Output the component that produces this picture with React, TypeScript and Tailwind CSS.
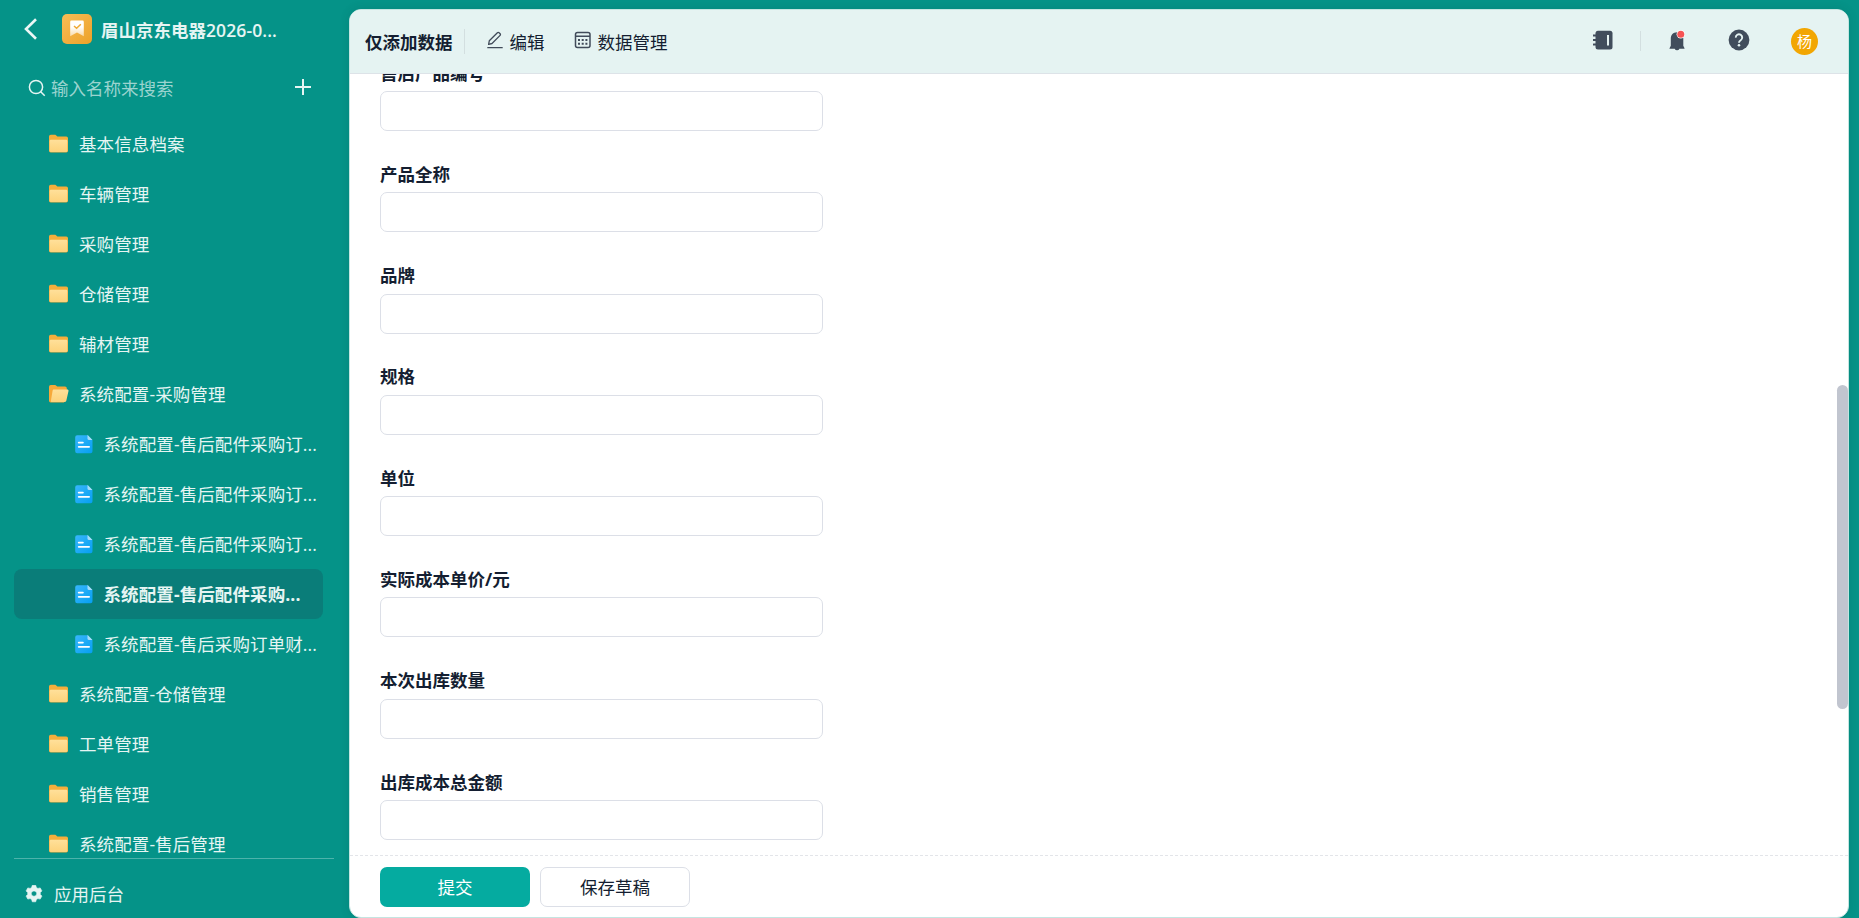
import { useState } from "react";
import { clsx } from "clsx";

type TreeItem = {
  label: string;
  kind: "folder" | "open" | "form";
};

const TREE: TreeItem[] = [
  { label: "基本信息档案", kind: "folder" },
  { label: "车辆管理", kind: "folder" },
  { label: "采购管理", kind: "folder" },
  { label: "仓储管理", kind: "folder" },
  { label: "辅材管理", kind: "folder" },
  { label: "系统配置-采购管理", kind: "open" },
  { label: "系统配置-售后配件采购订...", kind: "form" },
  { label: "系统配置-售后配件采购订...", kind: "form" },
  { label: "系统配置-售后配件采购订...", kind: "form" },
  { label: "系统配置-售后配件采购...", kind: "form" },
  { label: "系统配置-售后采购订单财...", kind: "form" },
  { label: "系统配置-仓储管理", kind: "folder" },
  { label: "工单管理", kind: "folder" },
  { label: "销售管理", kind: "folder" },
  { label: "系统配置-售后管理", kind: "folder" },
];

const FIELDS = [
  "售后产品编号",
  "产品全称",
  "品牌",
  "规格",
  "单位",
  "实际成本单价/元",
  "本次出库数量",
  "出库成本总金额",
];

function Gradients() {
  return (
    <svg width="0" height="0" className="absolute">
      <defs>
        <linearGradient id="folder" x1="0" y1="0" x2="0" y2="1">
          <stop offset="0" stopColor="#ffe09a" />
          <stop offset="1" stopColor="#fdd27a" />
        </linearGradient>
        <linearGradient id="doc" x1="0" y1="0" x2="1" y2="1">
          <stop offset="0" stopColor="#38b6fb" />
          <stop offset="1" stopColor="#069ff2" />
        </linearGradient>
        <linearGradient id="mark" x1="0" y1="0" x2="0" y2="1">
          <stop offset="0.4" stopColor="#fff" />
          <stop offset="1" stopColor="#fff" stopOpacity="0.55" />
        </linearGradient>
      </defs>
    </svg>
  );
}

function FolderIcon() {
  return (
    <svg width="20" height="20" viewBox="0 0 20 20" className="shrink-0">
      <path d="M0 2.600A1.800 1.800 0 0 1 1.800.8h4.600l2 1.700h8.800A1.800 1.800 0 0 1 19 4.300V16.800a1.800 1.800 0 0 1-1.800 1.800H1.800A1.800 1.800 0 0 1 0 16.800z" fill="#f6ae3c" />
      <rect x=".6" y="5.800" width="17.800" height="12.300" rx="1.300" fill="url(#folder)" />
    </svg>
  );
}

function FolderOpenIcon() {
  return (
    <svg width="20" height="20" viewBox="0 0 20 20" className="shrink-0">
      <path d="M0 2.800A1.800 1.800 0 0 1 1.800 1h4.500l2 1.500H16a1.800 1.800 0 0 1 1.800 1.800v8L15 18.600H1.800A1.800 1.800 0 0 1 0 16.800z" fill="#f6a93a" />
      <path d="M4.900 5.600h13.400c.8 0 1.400.7 1.200 1.500L17.300 16.700a1.900 1.900 0 0 1-1.800 1.400H3c-.8 0-1.300-.7-1.100-1.400L3.600 6.800c.1-.7.600-1.200 1.300-1.200z" fill="url(#folder)" />
    </svg>
  );
}

function FormIcon() {
  return (
    <svg width="18" height="20" viewBox="0 0 18 20" className="shrink-0">
      <path d="M2.200 1.200H12.500L17.500 6.200V17.200A2 2 0 0 1 15.500 19.200H2.200A2 2 0 0 1 .2 17.200V3.200A2 2 0 0 1 2.200 1.200z" fill="url(#doc)" />
      <path d="M12.500.8 17.500 6H14a1.500 1.500 0 0 1-1.500-1.500z" fill="#a5ddfb" />
      <path d="M3.700 8.600h4.200M3.700 12.800h10.400" stroke="#fff" strokeWidth="1.800" strokeLinecap="round" />
    </svg>
  );
}

function Sidebar() {
  const [active, setActive] = useState(9);

  return (
    <aside className="flex h-full w-[349px] shrink-0 flex-col text-[#e6f5f3]">
      <div className="flex h-[58px] shrink-0 items-center pl-[23px]">
        <svg width="16" height="24" viewBox="0 0 16 24" fill="none" stroke="#fff" strokeOpacity="0.92" strokeWidth="2.600">
          <path d="M13 2.200 3 12l10 9.800" />
        </svg>
        <span className="ml-[23px] flex h-[30px] w-[30px] items-center justify-center rounded-[5px] bg-linear-to-br from-[#f7bd55] to-[#eda126]">
          <svg width="14" height="18" viewBox="0 0 14 18">
            <path d="M1.500.6h11A1.300 1.300 0 0 1 13.800 1.900v14.400L7 12.600.2 16.300V1.900A1.300 1.300 0 0 1 1.500.6z" fill="url(#mark)" />
            <path d="m4 6 2.600 2.300L10.800 4.300" fill="none" stroke="#efa933" strokeWidth="1.500" />
          </svg>
        </span>
        <span className="mt-[2px] ml-[9px] font-bold whitespace-nowrap">
          眉山京东电器<span className="font-semibold tracking-[0.100px]">2026-0...</span>
        </span>
      </div>

      <div className="flex h-[61px] shrink-0 items-center pl-[28px]">
        <svg width="18" height="18" viewBox="0 0 18 18" fill="none" stroke="#e6f5f3" strokeWidth="1.500" className="mb-[2px] shrink-0">
          <circle cx="8" cy="8" r="6.600" />
          <path d="m12.700 12.700 4 4" />
        </svg>
        <span className="mb-[2px] ml-[5px] text-[#9bd4cf]">输入名称来搜索</span>
        <svg width="18" height="18" viewBox="0 0 18 18" className="mr-[37px] mb-[3px] ml-auto" stroke="#e6f5f3" strokeWidth="2">
          <path d="M9 1v16M1 9h16" />
        </svg>
      </div>

      <nav className="min-h-0 flex-1 overflow-hidden pl-[14px]">
        {TREE.map((item, idx) => (
          <button
            key={idx}
            onClick={() => setActive(idx)}
            className={clsx(
              "flex h-[50px] w-[309px] items-center rounded-[8px] text-left tracking-[0.100px] whitespace-nowrap",
              item.kind === "form" ? "pl-[61px]" : "pl-[35px]",
              idx === active && "bg-[#0a7d79] font-bold"
            )}
          >
            {item.kind === "folder" && <FolderIcon />}
            {item.kind === "open" && <FolderOpenIcon />}
            {item.kind === "form" && <FormIcon />}
            <span className={item.kind === "form" ? "mb-px ml-[10.500px]" : "mb-px ml-[10px]"}>{item.label}</span>
          </button>
        ))}
      </nav>

      <div className="mr-[15px] ml-[14px] flex h-[60px] shrink-0 items-center border-t border-[#4db3ab] pt-[10px] pl-[11px]">
        <svg width="18" height="18" viewBox="0 0 18 18">
          <path
            fillRule="evenodd"
            d="M7.300.3h3.400l.7 2.200 1.500.9 2.300-.5 1.700 3-1.600 1.700v1.800l1.600 1.700-1.700 3-2.300-.5-1.500.9-.7 2.300H7.300l-.7-2.300-1.500-.9-2.300.5-1.700-3 1.600-1.700V7.600L1.100 5.900l1.700-3 2.300.5 1.500-.9zM9 5.900a2.700 2.700 0 1 0 0 5.400 2.700 2.700 0 0 0 0-5.400z"
            fill="#e6f5f3"
            stroke="#e6f5f3"
            strokeWidth="0.600"
            strokeLinejoin="round"
          />
        </svg>
        <span className="ml-[11px]">应用后台</span>
      </div>
    </aside>
  );
}

function Header() {
  return (
    <header className="flex h-[64px] shrink-0 items-center border-b border-[#dde3e8] bg-[#e5f3f2] pl-[15px] text-[#141e31]">
      <span className="font-bold">仅添加数据</span>
      <span className="mb-px ml-[11px] h-[25px] w-px bg-[#d3dfe0]" />
      <button className="ml-[22px] flex items-center">
        <svg width="16" height="18" viewBox="0 0 16 18" fill="none" stroke="#414b5a" strokeWidth="1.300" className="mb-[3px]">
          <path d="M1.600 13.300 2.300 9.800 10.400 1.700a1.200 1.200 0 0 1 1.700 0l1 1a1.200 1.200 0 0 1 0 1.700L5 12.500z" strokeLinejoin="round" />
          <path d="M.3 16.700h15.400" />
        </svg>
        <span className="ml-[7px]">编辑</span>
      </button>
      <button className="ml-[29px] flex items-center">
        <svg width="18" height="18" viewBox="0 0 18 18" fill="none" stroke="#414b5a" strokeWidth="1.500" className="mb-[3px]">
          <rect x="1.500" y="1.500" width="14.500" height="15" rx="2" />
          <path d="M1.500 5.300h14.500" />
          <path d="M4 9h2M7.700 9h2M11.400 9h2M4 12.700h2M7.700 12.700h2M11.400 12.700h2" strokeWidth="1.900" />
        </svg>
        <span className="ml-[6px]">数据管理</span>
      </button>

      <div className="mr-[30px] mb-px ml-auto flex items-center">
        <svg width="20" height="20" viewBox="0 0 20 20" className="mb-[2px]">
          <rect x="2.500" y="0.700" width="17" height="18.800" rx="2.500" fill="#414d5c" />
          <path d="M.5 5.500h4M.5 10h4M.5 14.600h4" stroke="#414d5c" strokeWidth="2" strokeLinecap="round" />
          <path d="M15 5v10.500" stroke="#e5f3f2" strokeWidth="2" />
        </svg>
        <span className="ml-[27px] h-[20px] w-px bg-[#d3dfe0]" />
        <svg width="17" height="22" viewBox="0 0 17 22" className="mb-px ml-[28px]">
          <path d="M8 2.300c-3.900 0-6.200 2.800-6.200 6.300v7.200L.5 18.200v.5h5.200a2.500 2.500 0 0 0 4.700 0h5.100v-.5l-1.200-2.400V8.600c0-3.500-2.400-6.300-6.300-6.300z" fill="#414d5c" />
          <circle cx="11.800" cy="4.200" r="4.200" fill="#fff" />
          <circle cx="11.800" cy="4.200" r="3.500" fill="#f65354" />
        </svg>
        <svg width="22" height="22" viewBox="0 0 22 22" className="mb-[2px] ml-[42px]">
          <circle cx="11" cy="11" r="10.400" fill="#414d5c" />
          <path d="M7.800 8.600A3.200 3.200 0 1 1 12.700 11.200c-1.100.7-1.700 1.200-1.700 2.500" fill="none" stroke="#e5f3f2" strokeWidth="1.900" />
          <circle cx="11" cy="16.300" r="1.300" fill="#e5f3f2" />
        </svg>
        <span className="ml-[41px] flex h-[27px] w-[27px] items-center justify-center rounded-full bg-[#f2a602] text-[15px] text-white">
          杨
        </span>
      </div>
    </header>
  );
}

export default function App() {
  return (
    <div className="flex h-[918px] w-[1859px] overflow-hidden bg-[#059388] font-['Open_Sans','Noto_Sans_CJK_SC',sans-serif] text-[17.500px] leading-[24px]">
      <Gradients />
      <Sidebar />
      <main className="mt-[9px] flex h-[909px] w-[1500px] flex-col overflow-hidden rounded-[12px] border border-[#c4e5e1] bg-white shadow-[0_0_10px_rgba(0,60,55,0.15)]">
        <Header />
        <div className="flex min-h-0 flex-1 overflow-hidden">
          <form className="-mt-[13.500px] flex flex-1 flex-col gap-[30.800px] pl-[30px]">
            {FIELDS.map((label) => (
              <label key={label} className="flex shrink-0 flex-col gap-[7px] font-bold text-[#141e31]">
                <span className="h-[23.500px]">{label}</span>
                <input className="h-[40px] w-[443px] rounded-[7px] border border-[#dcdfe7] px-3 font-normal outline-none" />
              </label>
            ))}
          </form>
          <div className="mt-[311px] h-[324px] w-[11px] shrink-0 rounded-full bg-[#c1c5cf]" />
        </div>
        <footer className="flex h-[62px] shrink-0 gap-[10px] border-t border-dashed border-[#e3e5e9] pt-[11px] pl-[30px]">
          <button className="h-[40px] w-[150px] rounded-[7px] bg-[#05aba0] text-white">提交</button>
          <button className="h-[40px] w-[150px] rounded-[7px] border border-[#dcdfe7] text-[#141e31]">保存草稿</button>
        </footer>
      </main>
    </div>
  );
}
